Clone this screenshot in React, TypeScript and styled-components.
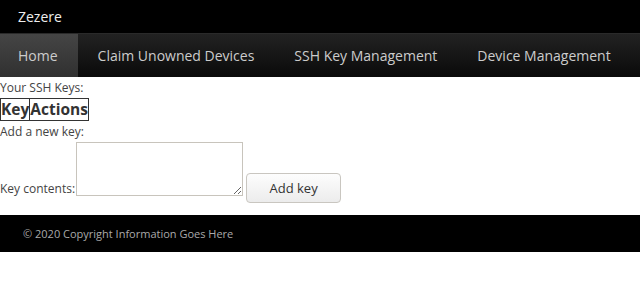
import styled, { createGlobalStyle } from "styled-components";

const GlobalStyle = createGlobalStyle`
  body {
    margin: 0;
    background: #fff;
    font-family: "Open Sans", "DejaVu Sans", sans-serif;
    color: #444;
  }
`;

const Header = styled.header`
  background: #000;
  height: 33px;
  display: flex;
  align-items: center;
  padding: 0 18px;
  color: #eee;
  font-size: 14px;
`;

const Nav = styled.nav`
  display: flex;
  height: 44px;
  background: linear-gradient(#222, #0a0a0a);
  border-top: 1px solid #2a2a2a;
  box-sizing: border-box;
`;

const NavItem = styled.a<{ active?: boolean }>`
  display: flex;
  align-items: center;
  padding: 0 20px;
  font-size: 14px;
  color: #ccc;
  text-decoration: none;
  background: ${(p) => (p.active ? "linear-gradient(#454545, #303030)" : "transparent")};

  &:first-child {
    padding-left: 18px;
  }
`;

const Main = styled.main`
  font-size: 12px;
  padding: 3px 0 12px;
`;

const Line = styled.div`
  line-height: 16px;
`;

const KeyTable = styled.table`
  border-collapse: collapse;
  margin: 2px 0 3px;
`;

const Th = styled.th`
  border: 1px solid #333;
  padding: 0;
  font-size: 15.5px;
  font-weight: bold;
  color: #333;
  line-height: 21px;
`;

const FormRow = styled.div`
  margin-top: 2px;
`;

const KeyInput = styled.textarea`
  width: 163px;
  height: 50px;
  border: 1px solid #c8c4bc;
  margin: 0 2px 0 1px;
  padding: 1px;
  resize: both;
  font: inherit;
  vertical-align: -3px;
`;

const Button = styled.button`
  width: 95px;
  height: 30px;
  border: 1px solid #c9c6c0;
  border-radius: 4px;
  background: linear-gradient(#fdfdfd, #ececec);
  font-family: inherit;
  font-size: 13px;
  color: #333;
  margin-left: 1px;
`;

const Footer = styled.footer`
  background: #000;
  height: 37px;
  display: flex;
  align-items: center;
  padding: 0 23px;
  font-size: 11px;
  color: #aaa;
`;

export default function App() {
  return (
    <>
      <GlobalStyle />
      <Header>Zezere</Header>
      <Nav>
        <NavItem active href="#">Home</NavItem>
        <NavItem href="#">Claim Unowned Devices</NavItem>
        <NavItem href="#">SSH Key Management</NavItem>
        <NavItem href="#">Device Management</NavItem>
      </Nav>
      <Main>
        <Line>Your SSH Keys:</Line>
        <KeyTable>
          <thead>
            <tr>
              <Th>Key</Th>
              <Th>Actions</Th>
            </tr>
          </thead>
        </KeyTable>
        <Line>Add a new key:</Line>
        <FormRow>
          Key contents:
          <KeyInput />
          <Button>Add key</Button>
        </FormRow>
      </Main>
      <Footer>© 2020 Copyright Information Goes Here</Footer>
    </>
  );
}
